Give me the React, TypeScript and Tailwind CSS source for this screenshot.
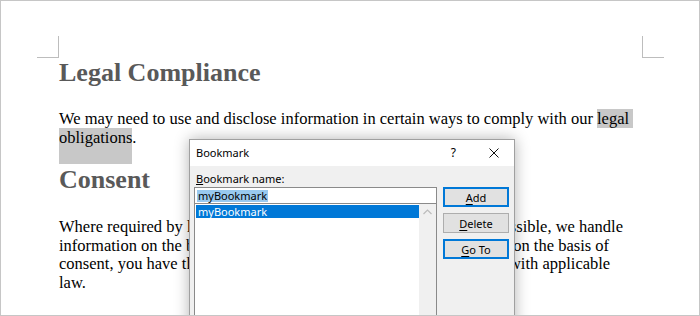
import React from "react";

const serif = { fontFamily: '"Liberation Serif", "Times New Roman", serif' };
const ui = { fontFamily: '"Noto Sans", "Segoe UI", sans-serif' };

const CornerMark = ({ side }: { side: "left" | "right" }) => (
	<div
		className={
			side === "left"
				? "h-[22px] w-[22px] border-b border-r border-[#bdbdbd]"
				: "h-[22px] w-[22px] border-b border-l border-[#bdbdbd]"
		}
	/>
);

interface DialogButtonProps {
	hotkey: string;
	rest: string;
	primary?: boolean;
}

const DialogButton = ({ hotkey, rest, primary }: DialogButtonProps) => (
	<button
		className={
			primary
				? "flex h-[20px] w-[66px] items-center justify-center border-2 border-[#0078d7] bg-[#e1e1e1] text-[11px] leading-none text-black"
				: "flex h-[20px] w-[66px] items-center justify-center border border-[#adadad] bg-[#e1e1e1] text-[11px] leading-none text-black"
		}
	>
		<span>
			<span className="underline underline-offset-2">{hotkey}</span>
			{rest}
		</span>
	</button>
);

const BookmarkDialog = () => {
	return (
		<div
			style={ui}
			className="absolute left-[188px] top-[138px] flex h-[220px] w-[326px] flex-col border border-[#a0a0a0] bg-[#f0f0f0] shadow-[0_0_14px_rgba(0,0,0,0.3)]"
		>
			<div className="flex h-[26px] items-center bg-white pl-[6px] text-[11px] text-black">
				<span className="flex-1">Bookmark</span>
				<span className="mr-[33px] text-[12px]">?</span>
				<svg
					width="10"
					height="10"
					viewBox="0 0 10 10"
					className="mr-[15px]"
				>
					<path
						d="M0.5 0.5 L9.5 9.5 M9.5 0.5 L0.5 9.5"
						stroke="#111"
						strokeWidth="1"
					/>
				</svg>
			</div>
			<div className="flex gap-[6px] pl-[4px] pt-[6px]">
				<div className="flex w-[243px] flex-col">
					<label className="pl-[2px] text-[11px] leading-[14px] text-black">
						<span className="underline underline-offset-1">B</span>ookmark name:
					</label>
					<div className="mt-[1px] flex h-[17px] items-center border border-[#8a8a8a] bg-white pl-[2px]">
						<span className="bg-[#99c9ef] px-[1px] text-[11px] leading-[12px] text-black">myBookmark</span>
					</div>
					<div className="flex h-[140px] border border-t-0 border-[#8a8a8a] bg-white">
						<div className="flex-1 pl-[1px] pt-[1px]">
							<div className="flex h-[13px] items-center bg-[#0078d7] pl-[2px] text-[11px] leading-none text-white">
								myBookmark
							</div>
						</div>
						<div className="flex w-[17px] justify-center bg-[#f0f0f0] pt-[5px]">
							<svg width="9" height="6" viewBox="0 0 9 6">
								<path
									d="M0.5 5 L4.5 1 L8.5 5"
									fill="none"
									stroke="#bcbcbc"
									strokeWidth="1.2"
								/>
							</svg>
						</div>
					</div>
				</div>
				<div className="flex flex-col gap-[6px] pt-[15px]">
					<DialogButton hotkey="A" rest="dd" primary />
					<DialogButton hotkey="D" rest="elete" />
					<DialogButton hotkey="G" rest="o To" primary />
				</div>
			</div>
		</div>
	);
};

const App = () => {
	return (
		<div className="relative h-[316px] w-[700px] overflow-hidden border border-[#c6c6c6] bg-white">
			<div className="flex justify-between pl-[36px] pr-[35px] pt-[35px]">
				<CornerMark side="left" />
				<CornerMark side="right" />
			</div>
			<div style={serif} className="pl-[58px] text-black">
				<h1 className="mb-[22px] text-[26px] font-bold leading-[30px] text-[#595959]">
					Legal Compliance
				</h1>
				<p className="mb-[18px] whitespace-nowrap text-[16.5px] leading-[18.5px]">
					We may need to use and disclose information in certain ways to comply with our{" "}
					<span className="bg-[#c8c8c8] pr-[4px]">legal</span>
					<br />
					<span className="bg-[#c8c8c8] pb-[17px]">obligations</span>.
				</p>
				<h1 className="mb-[23px] text-[26px] font-bold leading-[30px] text-[#595959]">
					Consent
				</h1>
				<p className="whitespace-nowrap text-[16.5px] leading-[18.5px]">
					Where required by law and where we believe it is reasonable and possible, we handle
					<br />
					information on the basis of your consent. Where we use information on the basis of
					<br />
					consent, you have the right to withdraw your consent in accordance with applicable
					<br />
					law.
				</p>
			</div>
			<BookmarkDialog />
		</div>
	);
};

export default App;
